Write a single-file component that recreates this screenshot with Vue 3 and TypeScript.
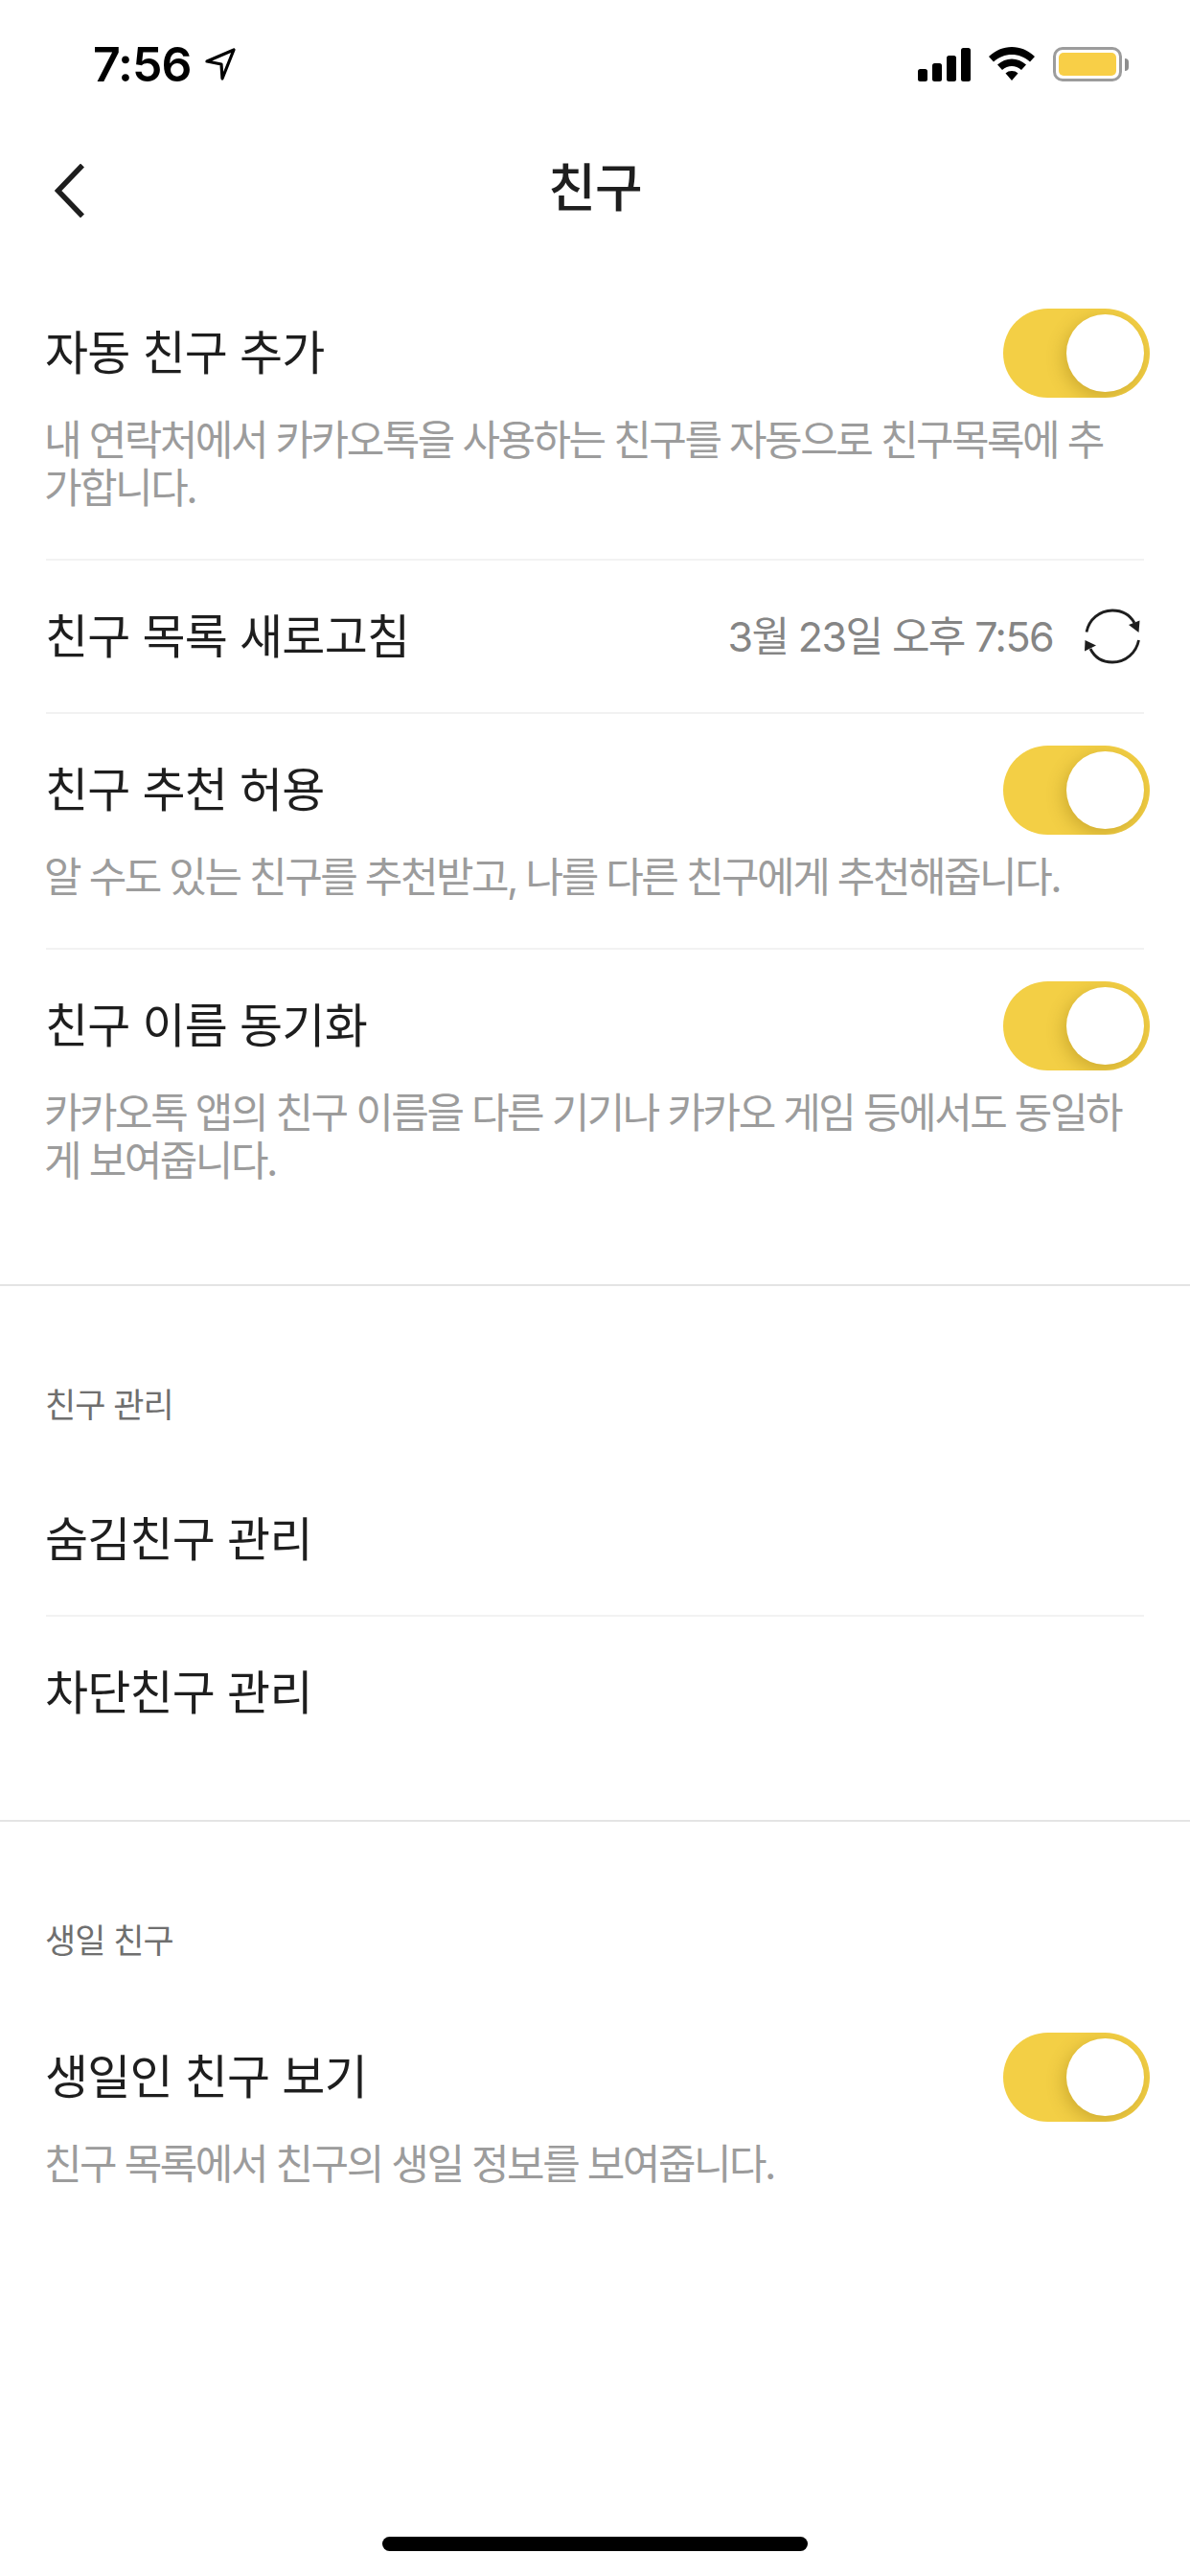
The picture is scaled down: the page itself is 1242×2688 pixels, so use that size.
<script setup lang="ts">
interface Row { title: string; desc?: string; toggle?: boolean }
const topRows: Row[] = [
  { title: '자동 친구 추가', desc: '내 연락처에서 카카오톡을 사용하는 친구를 자동으로 친구목록에 추가합니다.', toggle: true },
]
</script>

<template>
  <div class="page">
    <div class="status">
      <div class="time-wrap">
        <span class="time">7:56</span>
        <svg class="loc" width="32" height="34" viewBox="0 0 32 34"><path d="M2 14 L30 2 L18 32 L17 17 Z" fill="none" stroke="#000" stroke-width="3.200" stroke-linejoin="round"/></svg>
      </div>
      <div class="status-right">
        <svg width="55" height="35" viewBox="0 0 55 35"><rect x="0" y="22" width="10" height="13" rx="2.500"/><rect x="15" y="16" width="10" height="19" rx="2.500"/><rect x="30" y="8" width="10" height="27" rx="2.500"/><rect x="45" y="0" width="10" height="35" rx="2.500"/></svg>
        <svg class="wifi" width="48" height="36" viewBox="0 0 48 36"><path d="M24 0C33 0 41 3.500 48 10L43 15.500C37.500 10.500 31 8 24 8C17 8 10.500 10.500 5 15.500L0 10C7 3.500 15 0 24 0Z"/><path d="M24 12.500C29.500 12.500 34.500 14.500 39 18.500L34 24C31 21.500 27.500 20 24 20C20.500 20 17 21.500 14 24L9 18.500C13.500 14.500 18.500 12.500 24 12.500Z"/><path d="M24 25C26.500 25 28.800 25.800 30.500 27.500L24 35L17.500 27.500C19.200 25.800 21.500 25 24 25Z"/></svg>
        <div class="battery"><div class="battery-body"><div class="battery-fill"></div></div><div class="battery-cap"></div></div>
      </div>
    </div>

    <div class="nav">
      <svg class="back" width="32" height="56" viewBox="0 0 32 56"><path d="M29 1.500 L3.500 28 L29 54.500" fill="none" stroke="#1e1e1e" stroke-width="5.500"/></svg>
      <div class="nav-title">친구</div>
    </div>

    <div class="group first">
      <div v-for="r in topRows" :key="r.title" class="item">
        <div class="row toggle-row"><span class="title">{{ r.title }}</span><div class="toggle"><div class="knob"></div></div></div>
        <p class="desc">{{ r.desc }}</p>
      </div>
      <div class="line"></div>
      <div class="row plain refresh-row">
        <span class="title">친구 목록 새로고침</span>
        <div class="refresh">
          <span class="date">3월 23일 오후 7:56</span>
          <svg width="58" height="58" viewBox="0 0 58 58" fill="none"><path d="M2 24.500C4.500 11.500 15.500 2 29 2C39 2 47.500 7 52 15" stroke="#1e1e1e" stroke-width="2.800"/><path d="M46 17L57.500 12.500L56.500 25Z" fill="#1e1e1e"/><path d="M56.500 33C54 46 43 56 29 56C19 56 10.500 51 6 42" stroke="#1e1e1e" stroke-width="2.800"/><path d="M12 38.500L0.500 33L0 44.500Z" fill="#1e1e1e"/></svg>
        </div>
      </div>
      <div class="line"></div>
      <div class="item">
        <div class="row toggle-row"><span class="title">친구 추천 허용</span><div class="toggle"><div class="knob"></div></div></div>
        <p class="desc">알 수도 있는 친구를 추천받고, 나를 다른 친구에게 추천해줍니다.</p>
      </div>
      <div class="line"></div>
      <div class="item">
        <div class="row toggle-row"><span class="title">친구 이름 동기화</span><div class="toggle"><div class="knob"></div></div></div>
        <p class="desc">카카오톡 앱의 친구 이름을 다른 기기나 카카오 게임 등에서도 동일하게 보여줍니다.</p>
      </div>
    </div>

    <div class="section divided">
      <div class="label">친구 관리</div>
      <div class="row plain"><span class="title">숨김친구 관리</span></div>
      <div class="line"></div>
      <div class="row plain"><span class="title">차단친구 관리</span></div>
    </div>

    <div class="section birthday">
      <div class="label">생일 친구</div>
      <div class="item">
        <div class="row toggle-row"><span class="title">생일인 친구 보기</span><div class="toggle"><div class="knob"></div></div></div>
        <p class="desc">친구 목록에서 친구의 생일 정보를 보여줍니다.</p>
      </div>
    </div>

    <div class="home"></div>
  </div>
</template>

<style>
html, body { margin: 0; background: #fff; }
</style>

<style scoped>
.page {
  position: relative;
  width: 1242px;
  height: 2688px;
  overflow: hidden;
  background: #fff;
  font-family: Inter, "Noto Sans CJK KR", sans-serif;
  color: #1e1e1e;
}
.status {
  height: 134px;
  display: flex;
  justify-content: space-between;
  align-items: center;
  padding: 0 64px 0 97px;
  box-sizing: border-box;
}
.time-wrap { display: flex; align-items: center; gap: 14px; }
.time { font-size: 50px; font-weight: 600; color: #000; line-height: 1; letter-spacing: -1px; }
.status-right { display: flex; align-items: center; gap: 19px; }
.battery { display: flex; align-items: center; gap: 3px; }
.battery-body {
  width: 72px; height: 36px; border: 3px solid #9c9c9c; border-radius: 10px;
  box-sizing: border-box; padding: 3px;
}
.battery-fill { width: 100%; height: 100%; background: #f8cf47; border-radius: 5px; }
.battery-cap { width: 4px; height: 13px; background: #8e8e8e; border-radius: 0 6px 6px 0; }
.nav { height: 126px; position: relative; display: flex; align-items: center; justify-content: center; }
.back { position: absolute; left: 57px; top: 37px; }
.nav-title { font-size: 54px; font-weight: 500; line-height: 1; letter-spacing: -1px; }
.group.first { padding-top: 29px; padding-bottom: 55px; border-bottom: 2px solid #e4e4e4; }
.item { padding-top: 33px; }
.row { display: flex; align-items: center; justify-content: space-between; padding: 0 42px 0 47px; box-sizing: border-box; }
.toggle-row { height: 93px; }
.plain { height: 158px; padding-right: 48px; }
.refresh-row { padding-right: 52px; }
.title { font-size: 49px; line-height: 1; color: #1e1e1e; letter-spacing: -0.800px; }
.desc {
  margin: 0; padding: 19px 62px 49px 46px;
  font-size: 43px; line-height: 50px; color: #9c9c9c; letter-spacing: -2.500px; word-break: break-all;
}
.line { height: 2px; margin: 0 48px; background: #f2f2f2; }
.toggle {
  position: relative; width: 153px; height: 93px; border-radius: 47px;
  background: #f3cf45; overflow: hidden;
}
.knob {
  position: absolute; right: 6px; top: 6px; width: 81px; height: 81px; border-radius: 50%;
  background: #fff; box-shadow: -3px 5px 18px rgba(120, 90, 0, 0.3);
}
.refresh { display: flex; align-items: center; gap: 33px; }
.date { font-size: 43px; color: #858585; line-height: 1; letter-spacing: -1.600px; }
.section.divided { border-bottom: 2px solid #e4e4e4; padding-bottom: 54px; }
.birthday .item { padding-top: 35px; }
.label { font-size: 35px; color: #6f6f6f; line-height: 1; padding: 107px 47px 43px; letter-spacing: -1px; }
.home {
  position: absolute; left: 399px; top: 2647px; width: 444px; height: 15px;
  border-radius: 8px; background: #000;
}
</style>
